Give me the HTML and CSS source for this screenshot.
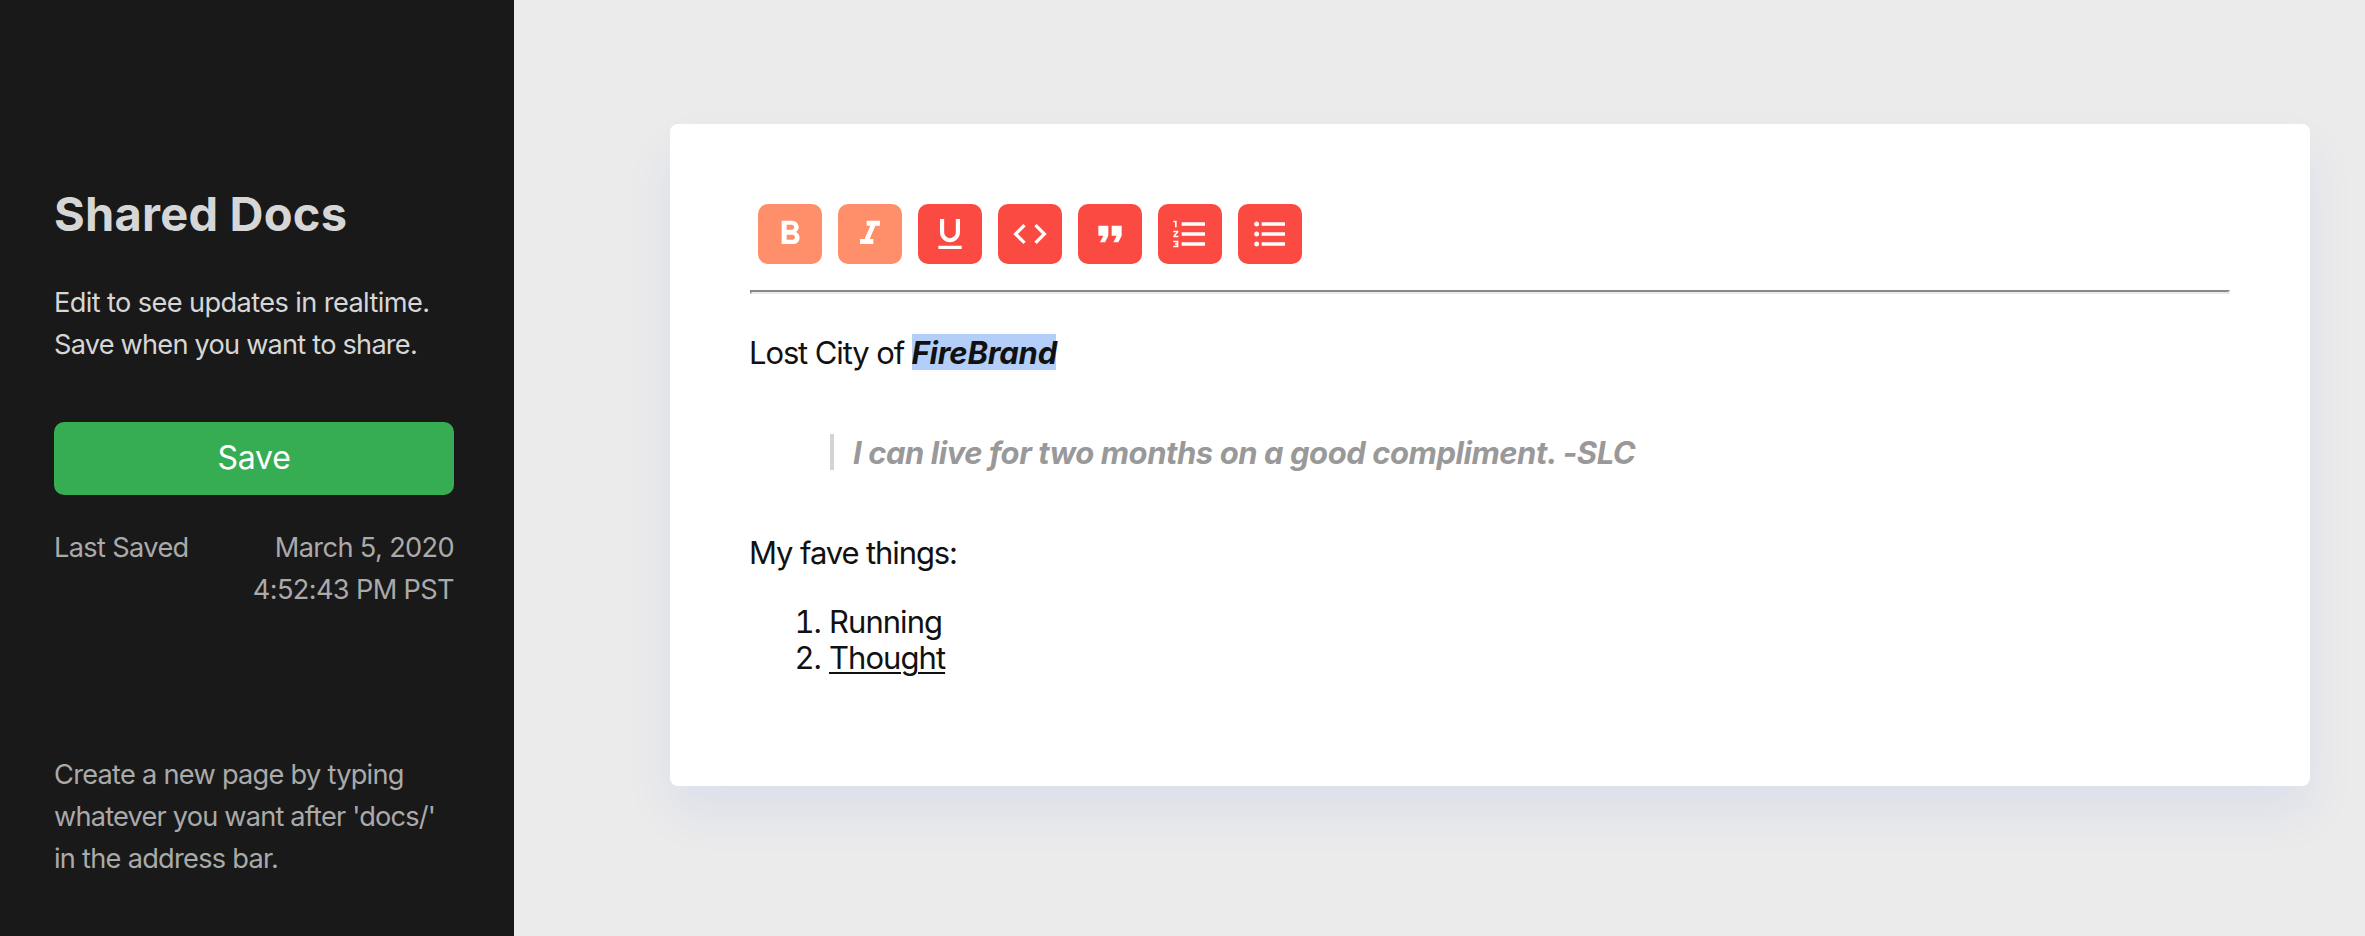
FILE: index.html
```html
<!DOCTYPE html>
<html lang="en">
<head>
<meta charset="utf-8">
<title>Shared Docs</title>
<link rel="stylesheet" href="styles.css">
</head>
<body>
<aside class="sidebar">
  <h1 class="title">Shared Docs</h1>
  <p class="intro"><span class="intro-a">Edit to see updates in realtime.</span><br><span class="intro-b">Save when you want to share.</span></p>
  <button class="save">Save</button>
  <div class="saved">
    <span>Last Saved</span>
    <span class="saved-date">March 5, 2020<br>4:52:43 PM PST</span>
  </div>
  <p class="hint">Create a new page by typing<br><span class="hint-b">whatever you want after 'docs/'</span><br>in the address bar.</p>
</aside>
<main class="main">
  <article class="card">
    <div class="toolbar">
      <button class="tool active" aria-label="Bold"><svg viewBox="0 0 24 24"><path d="M15.6 10.79c.97-.67 1.65-1.77 1.65-2.79 0-2.26-1.75-4-4-4H7v14h7.04c2.09 0 3.71-1.7 3.71-3.79 0-1.52-.86-2.82-2.15-3.42zM10 6.5h3c.83 0 1.5.67 1.5 1.5s-.67 1.5-1.5 1.5h-3v-3zm3.5 9H10v-3h3.500c.83 0 1.500.67 1.500 1.500s-.67 1.500-1.500 1.500z"/></svg></button>
      <button class="tool active" aria-label="Italic"><svg viewBox="0 0 24 24"><path d="M10 4v3h2.210l-3.420 8H6v3h8v-3h-2.210l3.420-8H18V4z"/></svg></button>
      <button class="tool" aria-label="Underline"><svg viewBox="0 0 24 24"><path d="M12 17c3.310 0 6-2.690 6-6V3h-2.500v8c0 1.930-1.570 3.500-3.500 3.500S8.500 12.930 8.500 11V3H6v8c0 3.310 2.690 6 6 6zm-7 2v2h14v-2H5z"/></svg></button>
      <button class="tool" aria-label="Code"><svg viewBox="0 0 24 24"><path d="M9.400 16.600L4.800 12l4.600-4.600L8 6l-6 6 6 6 1.400-1.400zm5.200 0l4.600-4.600-4.600-4.600L16 6l6 6-6 6-1.400-1.400z"/></svg></button>
      <button class="tool" aria-label="Quote"><svg viewBox="0 0 24 24"><path d="M6 17h3l2-4V7H5v6h3zm8 0h3l2-4V7h-6v6h3z"/></svg></button>
      <button class="tool" aria-label="Numbered list"><svg viewBox="0 0 24 24"><path d="M2 17h2v.5H3v1h1v.5H2v1h3v-4H2v1zm1-9h1V4H2v1h1v3zm-1 3h1.800L2 13.100v.9h3v-1H3.200L5 10.900V10H2v1zm5-6v2h14V5H7zm0 14h14v-2H7v2zm0-6h14v-2H7v2z"/></svg></button>
      <button class="tool" aria-label="Bulleted list"><svg viewBox="0 0 24 24"><path d="M4 10.500c-.83 0-1.500.67-1.500 1.500s.67 1.500 1.500 1.500 1.500-.67 1.500-1.500-.67-1.500-1.500-1.500zm0-6c-.83 0-1.500.67-1.500 1.500S3.170 7.500 4 7.500 5.500 6.830 5.500 6 4.830 4.500 4 4.500zm0 12c-.83 0-1.500.68-1.500 1.500s.68 1.500 1.500 1.500 1.500-.68 1.500-1.500-.67-1.500-1.500-1.500zM7 19h14v-2H7v2zm0-6h14v-2H7v2zm0-8v2h14V5H7z"/></svg></button>
    </div>
    <hr class="rule">
    <p class="line">Lost City of <mark class="picked">FireBrand</mark></p>
    <blockquote class="quote">I can live for two months on a good compliment. -SLC</blockquote>
    <p class="line faves">My fave things:</p>
    <ol class="list">
      <li><span class="num">1.</span>Running</li>
      <li><span class="num">2.</span><u>Thought</u></li>
    </ol>
  </article>
</main>
</body>
</html>
```

FILE: styles.css
```css
* { box-sizing: border-box; margin: 0; padding: 0; }

body {
  display: flex;
  height: 936px;
  overflow: hidden;
  background: #ebebeb;
  font-family: Inter, "Liberation Sans", sans-serif;
}

button { border: 0; font: inherit; color: #fff; }

.sidebar {
  width: 514px;
  height: 936px;
  padding: 186px 60px 0 54px;
  background: #191919;
  color: #aaa;
  font-size: 27.2px;
  line-height: 42px;
  letter-spacing: -0.65px;
  white-space: nowrap;
}

.title {
  font-size: 47px;
  font-weight: 700;
  line-height: 56px;
  letter-spacing: 0.22px;
  color: #d6d6d6;
}

.intro { margin-top: 40px; color: #d6d6d6; }
.intro-a { letter-spacing: -0.61px; }
.intro-b { letter-spacing: -0.79px; }

.save {
  display: block;
  width: 400px;
  height: 73px;
  margin-top: 56px;
  padding-bottom: 2px;
  border-radius: 10px;
  background: #37ad53;
  font-size: 32px;
  letter-spacing: -0.2px;
}

.saved {
  display: flex;
  justify-content: space-between;
  margin-top: 32px;
}

.saved-date { text-align: right; }

.hint { margin-top: 143px; letter-spacing: -0.73px; }
.hint-b { letter-spacing: -0.81px; }

.main { flex: 1; padding: 124px 55px 0 156px; }

.card {
  width: 1640px;
  height: 662px;
  padding: 80px;
  border-radius: 8px;
  background: #fff;
  color: #111;
  box-shadow: 0 26px 52px rgba(0, 60, 255, 0.065);
  font-size: 31px;
  line-height: 36px;
  letter-spacing: -1.1px;
}

.toolbar { display: flex; gap: 16px; padding-left: 8px; }

.tool {
  display: flex;
  align-items: center;
  justify-content: center;
  width: 64px;
  height: 60px;
  border-radius: 10px;
  background: #fa4a41;
}

.tool.active { background: #ff8f6b; }
.tool svg { width: 40px; height: 40px; fill: #fff; }

.rule {
  height: 4px;
  margin: 26px 0 40px;
  border: 2px solid;
  border-color: #888 #ebebeb #ebebeb #888;
}

.line {
  height: 36px;
  margin-left: -1px;
  line-height: 38px;
  letter-spacing: -1.12px;
}

.faves { letter-spacing: -1.1px; }

.picked {
  display: inline-block;
  width: 144px;
  height: 36px;
  background: #b2cef9;
  color: #111;
  font-style: italic;
  font-weight: 700;
  letter-spacing: -0.25px;
  vertical-align: top;
}

.quote {
  height: 36px;
  margin: 64px 0 64px 80px;
  padding-left: 19px;
  border-left: 4px solid #d3d3d3;
  color: #999;
  font-style: italic;
  font-weight: 700;
  line-height: 38px;
  letter-spacing: -0.45px;
}

.list { margin-top: 34px; list-style: none; }
.list li { display: flex; letter-spacing: -0.95px; }

.num {
  width: 79px;
  padding-right: 8px;
  font-variant-numeric: tabular-nums;
  text-align: right;
}

.list u { text-decoration-thickness: 2px; text-underline-offset: 3px; }
```
